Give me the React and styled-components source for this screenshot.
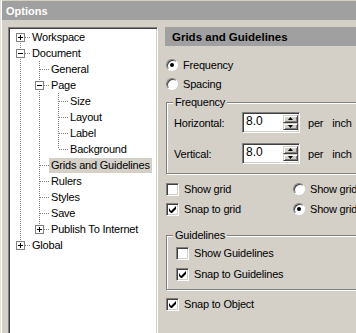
import React from "react";
import styled, { createGlobalStyle } from "styled-components";

const GlobalStyle = createGlobalStyle`
  html, body {
    margin: 0;
    padding: 0;
    overflow: hidden;
    background: #d4d0c8;
  }
  body {
    font-family: "Liberation Sans", Arial, sans-serif;
    font-size: 11px;
    letter-spacing: -0.2px;
    color: #000;
  }
`;

const Window = styled.div`
  width: 440px;
  height: 333px;
  display: flex;
  flex-direction: column;
  background: #d4d0c8;
  box-shadow: inset 1px 0 #e4e2dc, inset 2px 0 #fff;
`;

const TitleBar = styled.div`
  height: 19px;
  margin: 1px 0 0 2px;
  padding-left: 4px;
  display: flex;
  align-items: center;
  background: #a0a0a0;
  color: #fff;
  font-weight: bold;
  font-size: 11px;
  letter-spacing: 0;
`;

const Body = styled.div`
  display: flex;
  gap: 7px;
  padding: 7px 0 0 8px;
  flex: 1;
  min-height: 0;
`;

/* ---------- tree ---------- */

const TreePanel = styled.div`
  width: 150px;
  height: 340px;
  box-sizing: border-box;
  flex: none;
  background: #fff;
  border: 1px solid;
  border-color: #808080 #fff #fff #808080;
  box-shadow: inset 1px 1px #404040, inset -1px -1px #d4d0c8;
  padding: 1px 0 0 2px;
`;

const TreeRow = styled.div`
  display: flex;
  align-items: center;
  height: 16px;
`;

const TreeLabel = styled.span`
  height: 15px;
  line-height: 15px;
  padding: 0 2px;
  white-space: nowrap;
  background: ${(p) => (p.$selected ? "#d4d0c8" : "transparent")};
`;

const Cell = styled.svg`
  flex: none;
  display: block;
`;

const DOT = "#808080";

const Guide = ({ on }) => (
  <Cell width="19" height="16">
    {on && <line x1="9.5" y1="0" x2="9.5" y2="16" stroke={DOT} strokeDasharray="1 1" />}
  </Cell>
);

const Connector = ({ top, bottom, expander }) => (
  <Cell width="19" height="16">
    {top && <line x1="9.5" y1="0" x2="9.5" y2="8" stroke={DOT} strokeDasharray="1 1" />}
    {bottom && <line x1="9.5" y1="8" x2="9.5" y2="16" stroke={DOT} strokeDasharray="1 1" />}
    <line x1="10" y1="8.5" x2="19" y2="8.5" stroke={DOT} strokeDasharray="1 1" />
    {expander && (
      <>
        <rect x="5.5" y="4.5" width="8" height="8" fill="#fff" stroke="#808080" />
        <line x1="7" y1="8.5" x2="12" y2="8.5" stroke="#000" />
        {expander === "plus" && <line x1="9.5" y1="6" x2="9.5" y2="11" stroke="#000" />}
      </>
    )}
  </Cell>
);

const tree = [
  { label: "Workspace", collapsed: true },
  {
    label: "Document",
    children: [
      { label: "General" },
      {
        label: "Page",
        children: [{ label: "Size" }, { label: "Layout" }, { label: "Label" }, { label: "Background" }],
      },
      { label: "Grids and Guidelines", selected: true },
      { label: "Rulers" },
      { label: "Styles" },
      { label: "Save" },
      { label: "Publish To Internet", collapsed: true },
    ],
  },
  { label: "Global", collapsed: true },
];

const flatten = (nodes, guides = [], root = true) =>
  nodes.flatMap((n, i) => {
    const last = i === nodes.length - 1;
    const row = {
      ...n,
      guides,
      top: !(root && i === 0),
      bottom: !last,
      expander: n.children ? "minus" : n.collapsed ? "plus" : null,
    };
    return [row, ...(n.children ? flatten(n.children, [...guides, !last], false) : [])];
  });

const Tree = () => (
  <TreePanel>
    {flatten(tree).map((r) => (
      <TreeRow key={r.label}>
        {r.guides.map((g, i) => (
          <Guide key={i} on={g} />
        ))}
        <Connector top={r.top} bottom={r.bottom} expander={r.expander} />
        <TreeLabel $selected={r.selected}>{r.label}</TreeLabel>
      </TreeRow>
    ))}
  </TreePanel>
);

/* ---------- page ---------- */

const Page = styled.div`
  width: 260px;
  flex: none;
  display: flex;
  flex-direction: column;
`;

const PageHeader = styled.div`
  height: 19px;
  display: flex;
  align-items: center;
  padding-left: 7px;
  background: #a0a0a0;
  font-weight: bold;
  font-size: 11.5px;
  letter-spacing: 0;
`;

const Content = styled.div`
  display: flex;
  flex-direction: column;
  padding-left: 1px;
`;

const Option = styled.label`
  display: flex;
  align-items: center;
  gap: 5px;
  height: ${(p) => p.$h || 20}px;
  margin-left: ${(p) => p.$indent || 0}px;
  white-space: nowrap;
`;

const RadioDot = styled.span`
  width: 12px;
  height: 12px;
  box-sizing: border-box;
  flex: none;
  border-radius: 50%;
  background: #fff;
  border: 1px solid;
  border-color: #808080 #fff #fff #808080;
  box-shadow: inset 1px 1px #404040;
  display: flex;
  align-items: center;
  justify-content: center;
  &::after {
    content: "";
    display: ${(p) => (p.$checked ? "block" : "none")};
    width: 4px;
    height: 4px;
    border-radius: 50%;
    background: #000;
  }
`;

const Box = styled.span`
  width: 13px;
  height: 13px;
  box-sizing: border-box;
  flex: none;
  background: #fff;
  border: 1px solid;
  border-color: #808080 #fff #fff #808080;
  box-shadow: inset 1px 1px #404040, inset -1px -1px #d4d0c8;
  display: flex;
  align-items: center;
  justify-content: center;
`;

const Check = () => (
  <svg width="7" height="7" viewBox="0 0 7 7">
    <path d="M0 2 L0 5 L2 7 L3 7 L7 3 L7 0 L2 5 Z" fill="#000" />
  </svg>
);

const Radio = ({ checked, children, h }) => (
  <Option $h={h}>
    <RadioDot $checked={checked} />
    {children}
  </Option>
);

const Checkbox = ({ checked, children, indent, h }) => (
  <Option $indent={indent} $h={h}>
    <Box>{checked && <Check />}</Box>
    {children}
  </Option>
);

const Group = styled.fieldset`
  margin: ${(p) => p.$top || 0}px 0 0 0;
  padding: 0 0 ${(p) => p.$bottom || 0}px 6px;
  min-width: 0;
  border: 1px solid #808080;
  box-shadow: inset 1px 1px #fff, 1px 1px #fff;
  legend {
    padding: 0 2px;
    line-height: 13px;
    background: #d4d0c8;
  }
`;

const FieldRow = styled.div`
  display: flex;
  align-items: center;
  height: 21px;
  margin: ${(p) => p.$top || 0}px 0 0 1px;
  white-space: nowrap;
`;

const FieldLabel = styled.span`
  width: 68px;
  flex: none;
`;

const SpinBox = styled.div`
  display: flex;
  width: 58px;
  height: 21px;
  box-sizing: border-box;
  flex: none;
  padding: 2px 1px 2px 2px;
  background: #fff;
  border: 1px solid;
  border-color: #808080 #fff #fff #808080;
  box-shadow: inset 1px 1px #404040, inset -1px -1px #d4d0c8;
`;

const SpinText = styled.span`
  flex: 1;
  font-size: 12px;
  line-height: 13px;
  padding-left: 1px;
  letter-spacing: 0;
`;

const SpinButtons = styled.div`
  width: 15px;
  display: flex;
  flex-direction: column;
`;

const SpinButton = styled.div`
  flex: 1;
  box-sizing: border-box;
  background: #d4d0c8;
  border: 1px solid;
  border-color: #d4d0c8 #404040 #404040 #d4d0c8;
  box-shadow: inset 1px 1px #fff, inset -1px -1px #808080;
  display: flex;
  align-items: center;
  justify-content: center;
`;

const Arrow = ({ down }) => (
  <svg width="5" height="3" viewBox="0 0 5 3">
    <path d={down ? "M0 0 H5 L2.5 3 Z" : "M0 3 H5 L2.5 0 Z"} fill="#000" />
  </svg>
);

const Unit = styled.span`
  margin-left: ${(p) => p.$gap}px;
`;

const SpinField = ({ label, value, top }) => (
  <FieldRow $top={top}>
    <FieldLabel>{label}</FieldLabel>
    <SpinBox>
      <SpinText>{value}</SpinText>
      <SpinButtons>
        <SpinButton>
          <Arrow />
        </SpinButton>
        <SpinButton>
          <Arrow down />
        </SpinButton>
      </SpinButtons>
    </SpinBox>
    <Unit $gap={8}>per</Unit>
    <Unit $gap={9}>inch</Unit>
  </FieldRow>
);

const TwoCols = styled.div`
  display: grid;
  grid-template-columns: 127px auto;
  margin-top: 5px;
`;

const Stack = styled.div`
  display: flex;
  flex-direction: column;
  margin-top: ${(p) => p.$top || 0}px;
  gap: ${(p) => p.$gap || 0}px;
`;

export default function App() {
  return (
    <>
      <GlobalStyle />
      <Window>
        <TitleBar>Options</TitleBar>
        <Body>
          <Tree />
          <Page>
            <PageHeader>Grids and Guidelines</PageHeader>
            <Content>
              <Stack $top={9}>
                <Radio checked h={19}>Frequency</Radio>
                <Radio h={19}>Spacing</Radio>
              </Stack>
              <Group $top={3} $bottom={9}>
                <legend>Frequency</legend>
                <SpinField label="Horizontal:" value="8.0" top={3} />
                <SpinField label="Vertical:" value="8.0" top={10} />
              </Group>
              <TwoCols>
                <Stack>
                  <Checkbox>Show grid</Checkbox>
                  <Checkbox checked>Snap to grid</Checkbox>
                </Stack>
                <Stack>
                  <Radio>Show grid as lines</Radio>
                  <Radio checked>Show grid as dots</Radio>
                </Stack>
              </TwoCols>
              <Group $top={10} $bottom={5}>
                <legend>Guidelines</legend>
                <Stack $top={1} $gap={1}>
                  <Checkbox indent={3}>Show Guidelines</Checkbox>
                  <Checkbox indent={3} checked>Snap to Guidelines</Checkbox>
                </Stack>
              </Group>
              <Stack $top={4}>
                <Checkbox checked>Snap to Object</Checkbox>
              </Stack>
            </Content>
          </Page>
        </Body>
      </Window>
    </>
  );
}
